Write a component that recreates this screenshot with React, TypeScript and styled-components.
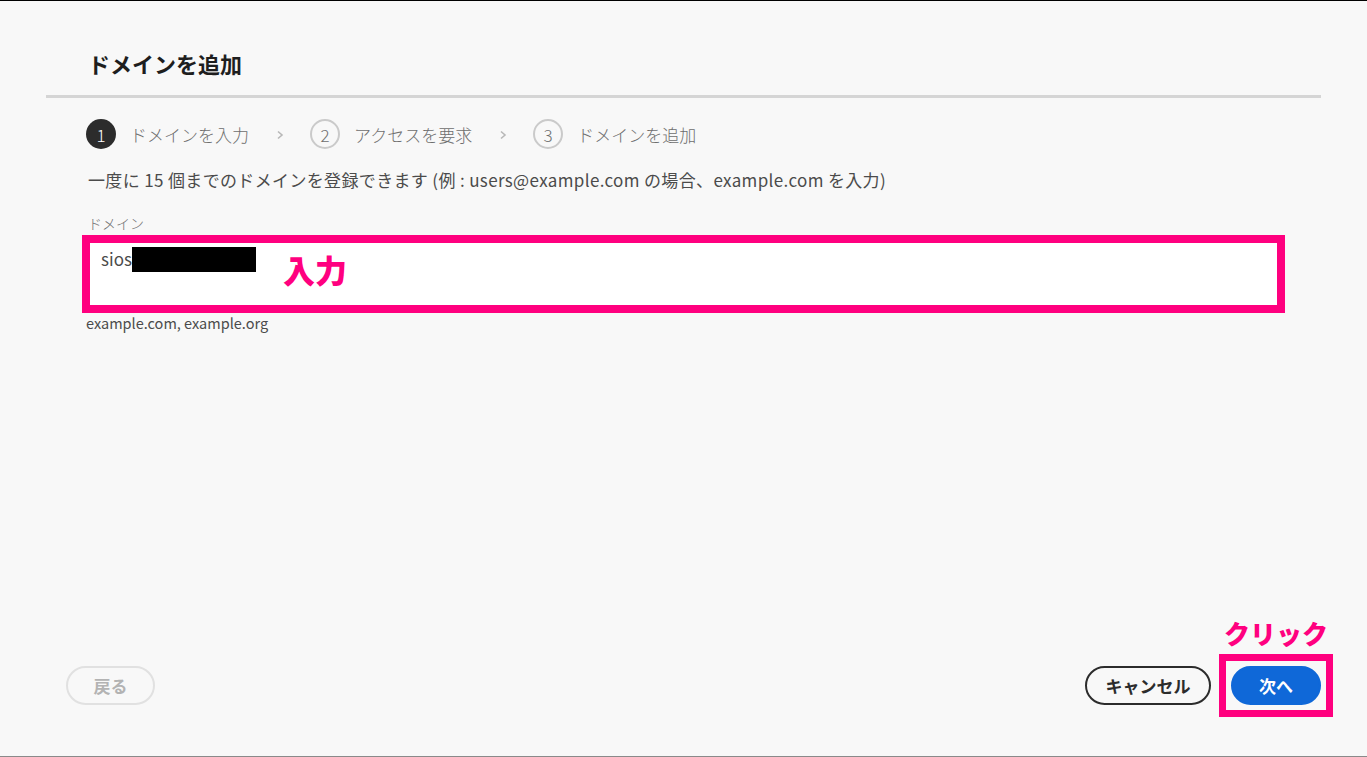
import styled, { createGlobalStyle } from "styled-components";

const GlobalStyle = createGlobalStyle`
  html, body {
    margin: 0;
    padding: 0;
    background: #f8f8f8;
  }
  body {
    font-family: "Noto Sans CJK JP", "Noto Sans", sans-serif;
    color: #2c2c2c;
  }
`

const Page = styled.div`
  height: 757px;
  box-sizing: border-box;
  border-top: 1px solid #000;
  border-bottom: 1px solid #8a8a8a;
  display: flex;
  flex-direction: column;
  overflow: hidden;
`

const Title = styled.h1`
  margin: 48px 0 18px 88px;
  font-size: 22px;
  line-height: 28px;
  font-weight: 700;
  color: #1e1e1e;
`

const Divider = styled.div`
  height: 3px;
  margin: 0 46px;
  background: #d5d5d5;
`

const Body = styled.div`
  padding: 0 82px 0 82px;
`

const Steps = styled.div`
  display: flex;
  align-items: center;
  margin: 21px 0 0 4px;
  height: 30px;
`

const Step = styled.div`
  display: flex;
  align-items: center;
  gap: 14px;
`

const Circle = styled.span<{ $active?: boolean }>`
  width: 30px;
  height: 30px;
  box-sizing: border-box;
  border-radius: 50%;
  display: flex;
  align-items: center;
  justify-content: center;
  font-size: 17px;
  font-weight: 300;
  background: ${(p) => (p.$active ? "#2c2c2c" : "transparent")};
  color: ${(p) => (p.$active ? "#fff" : "#6e6e6e")};
  border: ${(p) => (p.$active ? "none" : "2px solid #cacaca")};
`

const StepLabel = styled.span`
  font-size: 17px;
  font-weight: 300;
  color: #6e6e6e;
`

const Chevron = styled.svg`
  width: 8px;
  height: 10px;
  margin: 2px 12px 0 27px;
`

const Description = styled.p`
  margin: 19px 0 0 6px;
  font-size: 17px;
  line-height: 24px;
  color: #4b4b4b;
  letter-spacing: 0.35px;
`

const FieldLabel = styled.div`
  margin: 23px 0 4px 6px;
  font-size: 14px;
  line-height: 16px;
  color: #6e6e6e;
  font-weight: 300;
`

const Field = styled.div`
  height: 78px;
  box-sizing: border-box;
  border: 8px solid #ff007f;
  background: #fff;
  display: flex;
  align-items: flex-start;
  padding: 4px 0 0 11px;
`

const Value = styled.div`
  display: flex;
  align-items: flex-start;
  font-size: 17px;
  color: #4b4b4b;
  line-height: 24px;
`

const Redacted = styled.span`
  display: inline-block;
  width: 124px;
  height: 25px;
  background: #000;
`

const Callout = styled.span`
  font-weight: 900;
  color: #ff007f;
`

const InputCallout = styled(Callout)`
  font-size: 32px;
  line-height: 38px;
  margin: 3px 0 0 27px;
`

const Helper = styled.div`
  margin: 2px 0 0 4px;
  font-size: 14.5px;
  line-height: 16px;
  color: #4b4b4b;
`

const Footer = styled.div`
  margin-top: auto;
  display: flex;
  align-items: flex-end;
  padding: 0 34px 39px 66px;
`

const Button = styled.button<{ $variant: "back" | "cancel" | "primary" }>`
  height: 39px;
  box-sizing: border-box;
  border-radius: 20px;
  font-family: inherit;
  font-size: 17px;
  font-weight: 700;
  padding: 0;
  cursor: pointer;
  border: 2px solid
    ${(p) => (p.$variant === "back" ? "#e1e1e1" : p.$variant === "cancel" ? "#2c2c2c" : "#0f68d8")};
  background: ${(p) => (p.$variant === "primary" ? "#0f68d8" : "transparent")};
  color: ${(p) => (p.$variant === "back" ? "#b3b3b3" : p.$variant === "cancel" ? "#2c2c2c" : "#fff")};
  width: ${(p) => (p.$variant === "back" ? "89px" : p.$variant === "cancel" ? "126px" : "90px")};
`

const Spacer = styled.div`
  flex: 1;
`

const FooterButton = styled.div`
  margin-bottom: 12px;
`

const ClickGroup = styled.div`
  display: flex;
  flex-direction: column;
  align-items: center;
  margin-left: 8px;
`

const ClickCallout = styled(Callout)`
  font-size: 26px;
  line-height: 34px;
  margin-bottom: 4px;
`

const Highlight = styled.div`
  border: 7px solid #ff007f;
  padding: 5px;
  display: flex;
`

const ChevronIcon = () => (
  <Chevron viewBox="0 0 8 10">
    <path d="M2 1.5 L6 5 L2 8.5" fill="none" stroke="#b8b8b8" strokeWidth="1.6" />
  </Chevron>
)

const steps = ["ドメインを入力", "アクセスを要求", "ドメインを追加"]

const App = () => {
  return (
    <>
      <GlobalStyle />
      <Page>
        <Title>ドメインを追加</Title>
        <Divider />
        <Body>
          <Steps>
            {steps.map((label, i) => (
              <Step key={label}>
                {i > 0 && <ChevronIcon />}
                <Circle $active={i === 0}>{i + 1}</Circle>
                <StepLabel>{label}</StepLabel>
              </Step>
            ))}
          </Steps>
          <Description>
            一度に 15 個までのドメインを登録できます (例 : users@example.com の場合、example.com を入力)
          </Description>
          <FieldLabel>ドメイン</FieldLabel>
          <Field>
            <Value>
              sios<Redacted />
            </Value>
            <InputCallout>入力</InputCallout>
          </Field>
          <Helper>example.com, example.org</Helper>
        </Body>
        <Footer>
          <FooterButton>
            <Button $variant="back" disabled>戻る</Button>
          </FooterButton>
          <Spacer />
          <FooterButton>
            <Button $variant="cancel">キャンセル</Button>
          </FooterButton>
          <ClickGroup>
            <ClickCallout>クリック</ClickCallout>
            <Highlight>
              <Button $variant="primary">次へ</Button>
            </Highlight>
          </ClickGroup>
        </Footer>
      </Page>
    </>
  )
}

export default App
